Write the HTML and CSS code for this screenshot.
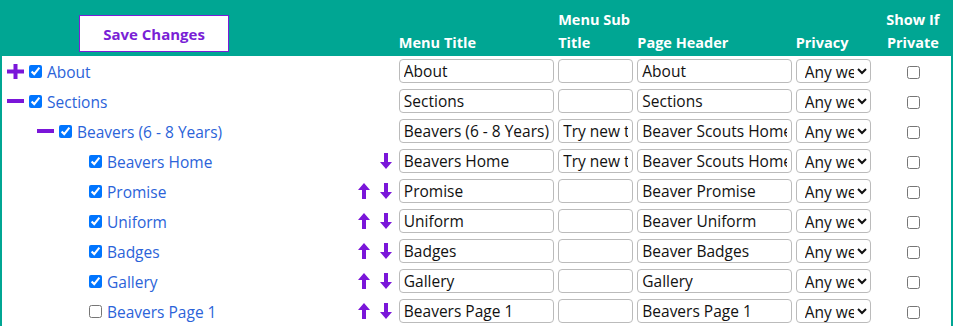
FILE: index.html
```html
<!DOCTYPE html>
<html lang="en">
  <head>
    <meta charset="UTF-8" />
    <meta name="viewport" content="width=device-width, initial-scale=1.0" />
    <title>Menu Editor</title>
    <link rel="stylesheet" href="styles.css">
  </head>
  <body>
    <table class="menuTable">
      <colgroup>
        <col class="colTree" />
        <col class="colMove" />
        <col class="colTitle" />
        <col class="colSub" />
        <col class="colHeader" />
        <col class="colPrivacy" />
        <col class="colShow" />
      </colgroup>
      <thead>
        <tr>
          <th class="saveCell"><button class="saveBtn">Save Changes</button></th>
          <th></th>
          <th>Menu Title</th>
          <th>Menu Sub Title</th>
          <th>Page Header</th>
          <th>Privacy</th>
          <th class="center">Show If Private</th>
        </tr>
      </thead>
      <tbody>
        <tr>
          <td class="tree level1">
            <span class="toggle"><svg width="17" height="15" viewBox="0 0 17 15"><rect x="6.5" y="0" width="4" height="15" /><rect x="0" y="5.5" width="17" height="4" /></svg></span><input type="checkbox" checked /><a href="#">About</a>
          </td>
          <td class="move"></td>
          <td><input class="field wide" type="text" value="About" /></td>
          <td><input class="field narrow" type="text" value="" /></td>
          <td><input class="field wide" type="text" value="About" /></td>
          <td><select class="privacy"><option>Any website user</option></select></td>
          <td class="center"><input type="checkbox" /></td>
        </tr>
        <tr>
          <td class="tree level1">
            <span class="toggle"><svg width="17" height="15" viewBox="0 0 17 15"><rect x="0" y="5" width="17" height="4" /></svg></span><input type="checkbox" checked /><a href="#">Sections</a>
          </td>
          <td class="move"></td>
          <td><input class="field wide" type="text" value="Sections" /></td>
          <td><input class="field narrow" type="text" value="" /></td>
          <td><input class="field wide" type="text" value="Sections" /></td>
          <td><select class="privacy"><option>Any website user</option></select></td>
          <td class="center"><input type="checkbox" /></td>
        </tr>
        <tr>
          <td class="tree level2">
            <span class="toggle"><svg width="17" height="15" viewBox="0 0 17 15"><rect x="0" y="5" width="17" height="4" /></svg></span><input type="checkbox" checked /><a href="#">Beavers (6 - 8 Years)</a>
          </td>
          <td class="move"></td>
          <td><input class="field wide" type="text" value="Beavers (6 - 8 Years)" /></td>
          <td><input class="field narrow" type="text" value="Try new things" /></td>
          <td><input class="field wide" type="text" value="Beaver Scouts Home" /></td>
          <td><select class="privacy"><option>Any website user</option></select></td>
          <td class="center"><input type="checkbox" /></td>
        </tr>
        <tr>
          <td class="tree level3">
            <span class="toggle"></span><input type="checkbox" checked /><a href="#">Beavers Home</a>
          </td>
          <td class="move">
            <span class="arrow"></span>
            <span class="arrow"><svg width="12" height="16" viewBox="0 0 12 16"><polygon points="4,0 8,0 8,9 12,9 6,16 0,9 4,9" /></svg></span>
          </td>
          <td><input class="field wide" type="text" value="Beavers Home" /></td>
          <td><input class="field narrow" type="text" value="Try new things" /></td>
          <td><input class="field wide" type="text" value="Beaver Scouts Home" /></td>
          <td><select class="privacy"><option>Any website user</option></select></td>
          <td class="center"><input type="checkbox" /></td>
        </tr>
        <tr>
          <td class="tree level3">
            <span class="toggle"></span><input type="checkbox" checked /><a href="#">Promise</a>
          </td>
          <td class="move">
            <span class="arrow"><svg width="12" height="16" viewBox="0 0 12 16"><polygon points="4,16 8,16 8,7 12,7 6,0 0,7 4,7" /></svg></span>
            <span class="arrow"><svg width="12" height="16" viewBox="0 0 12 16"><polygon points="4,0 8,0 8,9 12,9 6,16 0,9 4,9" /></svg></span>
          </td>
          <td><input class="field wide" type="text" value="Promise" /></td>
          <td><input class="field narrow" type="text" value="" /></td>
          <td><input class="field wide" type="text" value="Beaver Promise" /></td>
          <td><select class="privacy"><option>Any website user</option></select></td>
          <td class="center"><input type="checkbox" /></td>
        </tr>
        <tr>
          <td class="tree level3">
            <span class="toggle"></span><input type="checkbox" checked /><a href="#">Uniform</a>
          </td>
          <td class="move">
            <span class="arrow"><svg width="12" height="16" viewBox="0 0 12 16"><polygon points="4,16 8,16 8,7 12,7 6,0 0,7 4,7" /></svg></span>
            <span class="arrow"><svg width="12" height="16" viewBox="0 0 12 16"><polygon points="4,0 8,0 8,9 12,9 6,16 0,9 4,9" /></svg></span>
          </td>
          <td><input class="field wide" type="text" value="Uniform" /></td>
          <td><input class="field narrow" type="text" value="" /></td>
          <td><input class="field wide" type="text" value="Beaver Uniform" /></td>
          <td><select class="privacy"><option>Any website user</option></select></td>
          <td class="center"><input type="checkbox" /></td>
        </tr>
        <tr>
          <td class="tree level3">
            <span class="toggle"></span><input type="checkbox" checked /><a href="#">Badges</a>
          </td>
          <td class="move">
            <span class="arrow"><svg width="12" height="16" viewBox="0 0 12 16"><polygon points="4,16 8,16 8,7 12,7 6,0 0,7 4,7" /></svg></span>
            <span class="arrow"><svg width="12" height="16" viewBox="0 0 12 16"><polygon points="4,0 8,0 8,9 12,9 6,16 0,9 4,9" /></svg></span>
          </td>
          <td><input class="field wide" type="text" value="Badges" /></td>
          <td><input class="field narrow" type="text" value="" /></td>
          <td><input class="field wide" type="text" value="Beaver Badges" /></td>
          <td><select class="privacy"><option>Any website user</option></select></td>
          <td class="center"><input type="checkbox" /></td>
        </tr>
        <tr>
          <td class="tree level3">
            <span class="toggle"></span><input type="checkbox" checked /><a href="#">Gallery</a>
          </td>
          <td class="move">
            <span class="arrow"><svg width="12" height="16" viewBox="0 0 12 16"><polygon points="4,16 8,16 8,7 12,7 6,0 0,7 4,7" /></svg></span>
            <span class="arrow"><svg width="12" height="16" viewBox="0 0 12 16"><polygon points="4,0 8,0 8,9 12,9 6,16 0,9 4,9" /></svg></span>
          </td>
          <td><input class="field wide" type="text" value="Gallery" /></td>
          <td><input class="field narrow" type="text" value="" /></td>
          <td><input class="field wide" type="text" value="Gallery" /></td>
          <td><select class="privacy"><option>Any website user</option></select></td>
          <td class="center"><input type="checkbox" /></td>
        </tr>
        <tr>
          <td class="tree level3">
            <span class="toggle"></span><input type="checkbox" /><a href="#">Beavers Page 1</a>
          </td>
          <td class="move">
            <span class="arrow"><svg width="12" height="16" viewBox="0 0 12 16"><polygon points="4,16 8,16 8,7 12,7 6,0 0,7 4,7" /></svg></span>
            <span class="arrow"><svg width="12" height="16" viewBox="0 0 12 16"><polygon points="4,0 8,0 8,9 12,9 6,16 0,9 4,9" /></svg></span>
          </td>
          <td><input class="field wide" type="text" value="Beavers Page 1" /></td>
          <td><input class="field narrow" type="text" value="" /></td>
          <td><input class="field wide" type="text" value="Beavers Page 1" /></td>
          <td><select class="privacy"><option>Any website user</option></select></td>
          <td class="center"><input type="checkbox" /></td>
        </tr>
      </tbody>
    </table>
  </body>
</html>
```

FILE: styles.css
```css
body {
  margin: 0;
  padding: 0;
  font-family: "Open Sans", Arial, sans-serif;
  font-size: 15.5px;
  overflow: hidden;
}

.menuTable {
  width: 953px;
  table-layout: fixed;
  border-collapse: collapse;
  border-left: 2px solid #00a693;
  border-right: 2px solid #00a693;
}

.colTree {
  width: 353px;
}
.colMove {
  width: 42px;
}
.colTitle {
  width: 159px;
}
.colSub {
  width: 79px;
}
.colHeader {
  width: 158px;
}
.colPrivacy {
  width: 81px;
}
.colShow {
  width: 77px;
}

thead tr {
  height: 56px;
  background-color: #00a693;
}

th {
  color: #fff;
  font-weight: bold;
  font-size: 14.5px;
  line-height: 23px;
  text-align: left;
  vertical-align: bottom;
  padding: 0 0 2px 2px;
}

.saveCell {
  padding: 0 0 4px 77px;
}

.saveBtn {
  width: 150px;
  height: 37px;
  background: #fff;
  border: 1px solid #7a1fd6;
  color: #7a1fd6;
  font-family: inherit;
  font-weight: bold;
  font-size: 15px;
  cursor: pointer;
}

.center {
  text-align: center;
}
th.center {
  padding-left: 0;
}

tbody tr {
  height: 30px;
}

td {
  padding: 0 0 0 2px;
  vertical-align: middle;
}

.tree {
  white-space: nowrap;
}
.tree.level1 {
  padding-left: 5px;
}
.tree.level2 {
  padding-left: 35px;
}
.tree.level3 {
  padding-left: 65px;
}

.toggle {
  display: inline-block;
  width: 17px;
  height: 15px;
  margin-right: 5px;
  vertical-align: middle;
  fill: #7a16d9;
}
.toggle svg {
  display: block;
}

.tree input[type="checkbox"] {
  margin: 0 5px 0 0;
  vertical-align: middle;
}

.tree a {
  color: #2b63d9;
  text-decoration: none;
  vertical-align: middle;
}

.move {
  padding-left: 3px;
  white-space: nowrap;
  font-size: 0;
}

.arrow {
  display: inline-block;
  width: 12px;
  height: 16px;
  margin-right: 10px;
  vertical-align: middle;
  fill: #7a16d9;
}
.arrow svg {
  display: block;
}

.field {
  box-sizing: border-box;
  height: 24px;
  border: 1px solid #bbb;
  border-radius: 4px;
  padding: 0 4px;
  font-family: inherit;
  font-size: 15.5px;
  color: #111;
  display: block;
}
.field.wide {
  width: 155px;
}
.field.narrow {
  width: 75px;
}

.privacy {
  box-sizing: border-box;
  width: 75px;
  height: 24px;
  border: 1px solid #bbb;
  border-radius: 4px;
  padding-left: 4px;
  font-family: inherit;
  font-size: 15.5px;
  color: #111;
  background: #fff;
  display: block;
}

td input[type="checkbox"] {
  margin: 0;
  vertical-align: middle;
}
```
